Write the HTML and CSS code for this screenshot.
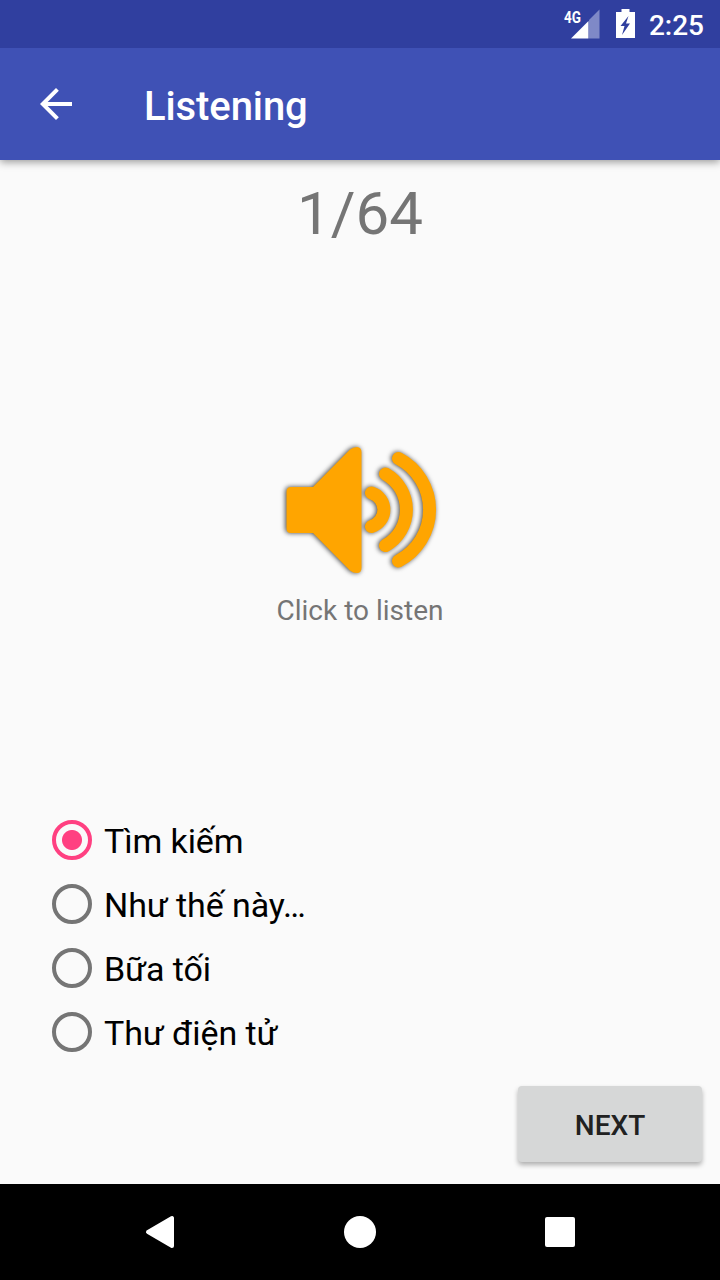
FILE: index.html
```
<!DOCTYPE html>
<html lang="vi">
<head>
<meta charset="utf-8">
<title>Listening</title>
<link rel="stylesheet" href="styles.css">
</head>
<body>
<div class="screen">
  <div class="status-bar">
    <svg class="signal" width="38" height="32" viewBox="0 0 38 32">
      <path d="M36.500 1.500V30.500H26V12z" fill="#7f89c7"/>
      <path d="M8 30.500L25.500 13V30.500z" fill="#fff"/>
      <text class="network" x="1" y="14.500" textLength="17" lengthAdjust="spacingAndGlyphs">4G</text>
    </svg>
    <svg class="battery" width="19" height="30" viewBox="0 0 19 30">
      <path d="M5.500 0h8v3H19v26H0V3h5.500z" fill="#fff"/>
      <path d="M12.500 7L4.500 17h4l-2.500 9 8-11.500h-4z" fill="#303f9f"/>
    </svg>
    <span class="clock">2:25</span>
  </div>
  <header class="app-bar">
    <svg class="back" width="48" height="48" viewBox="0 0 24 24">
      <path d="M20 11H7.830l5.590-5.590L12 4l-8 8 8 8 1.410-1.410L7.830 13H20v-2z" fill="#fff"/>
    </svg>
    <h1 class="title">Listening</h1>
  </header>
  <main class="content">
    <div class="counter">1/64</div>
    <div class="listen">
      <svg class="speaker" width="180" height="150" viewBox="270 435 180 150">
        <g fill="none" stroke="#ffa500" stroke-width="13" stroke-linecap="round">
          <path d="M291 487H313L350 449.500Q353 447 357 447Q361.500 447.500 361.500 452V568Q361.500 573 357 573Q353 573 350 570.500L313 533H291Q286.500 533 286.500 528.500V491.500Q286.500 487 291 487z" fill="#ffa500" stroke="none"/>
          <path d="M371.500 493A17.500 17.500 0 0 1 371.500 526.500"/>
          <path d="M385.500 474A41 41 0 0 1 385.500 545.500"/>
          <path d="M398.500 458.500A57.800 57.800 0 0 1 398.500 561"/>
        </g>
      </svg>
      <div class="caption">Click to listen</div>
    </div>
    <div class="options">
      <label class="option"><span class="radio checked"></span><span class="label">Tìm kiếm</span></label>
      <label class="option"><span class="radio"></span><span class="label">Như thế này…</span></label>
      <label class="option"><span class="radio"></span><span class="label">Bữa tối</span></label>
      <label class="option"><span class="radio"></span><span class="label">Thư điện tử</span></label>
    </div>
    <button class="next">NEXT</button>
  </main>
  <nav class="nav-bar">
    <svg width="32" height="36" viewBox="0 0 32 36"><path d="M4 18L28 4V32z" fill="#fff" stroke="#fff" stroke-width="4" stroke-linejoin="round"/></svg>
    <svg width="32" height="32" viewBox="0 0 32 32"><circle cx="16" cy="16" r="16" fill="#fff"/></svg>
    <svg width="32" height="32" viewBox="0 0 32 32"><rect x="1" y="1" width="30" height="30" rx="2" fill="#fff"/></svg>
  </nav>
</div>
</body>
</html>
```
FILE: styles.css
```
* { box-sizing: border-box; }
body { margin: 0; font-family: Roboto, "Noto Sans", sans-serif; }
.screen {
  width: 720px;
  height: 1280px;
  display: flex;
  flex-direction: column;
  background: #fafafa;
  overflow: hidden;
}
.status-bar {
  height: 48px;
  flex: none;
  display: flex;
  justify-content: flex-end;
  align-items: flex-start;
  padding: 8px 16px 0 0;
  background: #303f9f;
  color: #fff;
}
.network { font-size: 16px; font-weight: 700; fill: #fff; }
.battery { margin: 1px 14px 0 15px; }
.clock { font-size: 28px; font-weight: 500; line-height: 36px; }
.app-bar {
  height: 112px;
  flex: none;
  display: flex;
  align-items: center;
  padding-left: 32px;
  background: #3f51b5;
  box-shadow: 0 2px 8px rgba(0, 0, 0, 0.4);
  clip-path: inset(0 0 -12px 0);
}
.title { margin: 6px 0 0 64px; font-size: 40px; font-weight: 500; line-height: 48px; letter-spacing: -0.1px; color: #fff; }
.content { flex: 1; display: flex; flex-direction: column; }
.counter { margin-top: 19px; font-size: 60px; line-height: 70px; text-align: center; color: #757575; }
.listen { display: flex; flex-direction: column; align-items: center; margin-top: 186px; }
.speaker { filter: drop-shadow(-0.5px 0 2.5px rgba(0, 0, 0, 0.75)); }
.caption { margin-top: 9px; font-size: 28px; line-height: 33px; color: #757575; }
.options { margin: 181px 0 0 52px; }
.option { display: flex; align-items: center; gap: 12px; height: 64px; font-size: 34px; letter-spacing: -0.1px; color: #000; }
.label { padding-top: 2px; }
.radio { width: 40px; height: 40px; border: 4px solid #757575; border-radius: 50%; }
.radio.checked { border-color: #ff4081; background: radial-gradient(circle, #ff4081 9.5px, transparent 10.5px); }
.next {
  align-self: flex-end;
  width: 184px;
  height: 76px;
  margin: 22px 18px 0 0;
  padding: 2px 0 0;
  border: 0;
  border-radius: 4px;
  background: #d6d7d7;
  box-shadow: 0 3px 5px rgba(0, 0, 0, 0.3);
  font: 500 28px Roboto, sans-serif;
  color: #212121;
}
.nav-bar {
  height: 96px;
  flex: none;
  display: flex;
  align-items: center;
  justify-content: space-between;
  padding: 0 144px;
  background: #000;
}
```
